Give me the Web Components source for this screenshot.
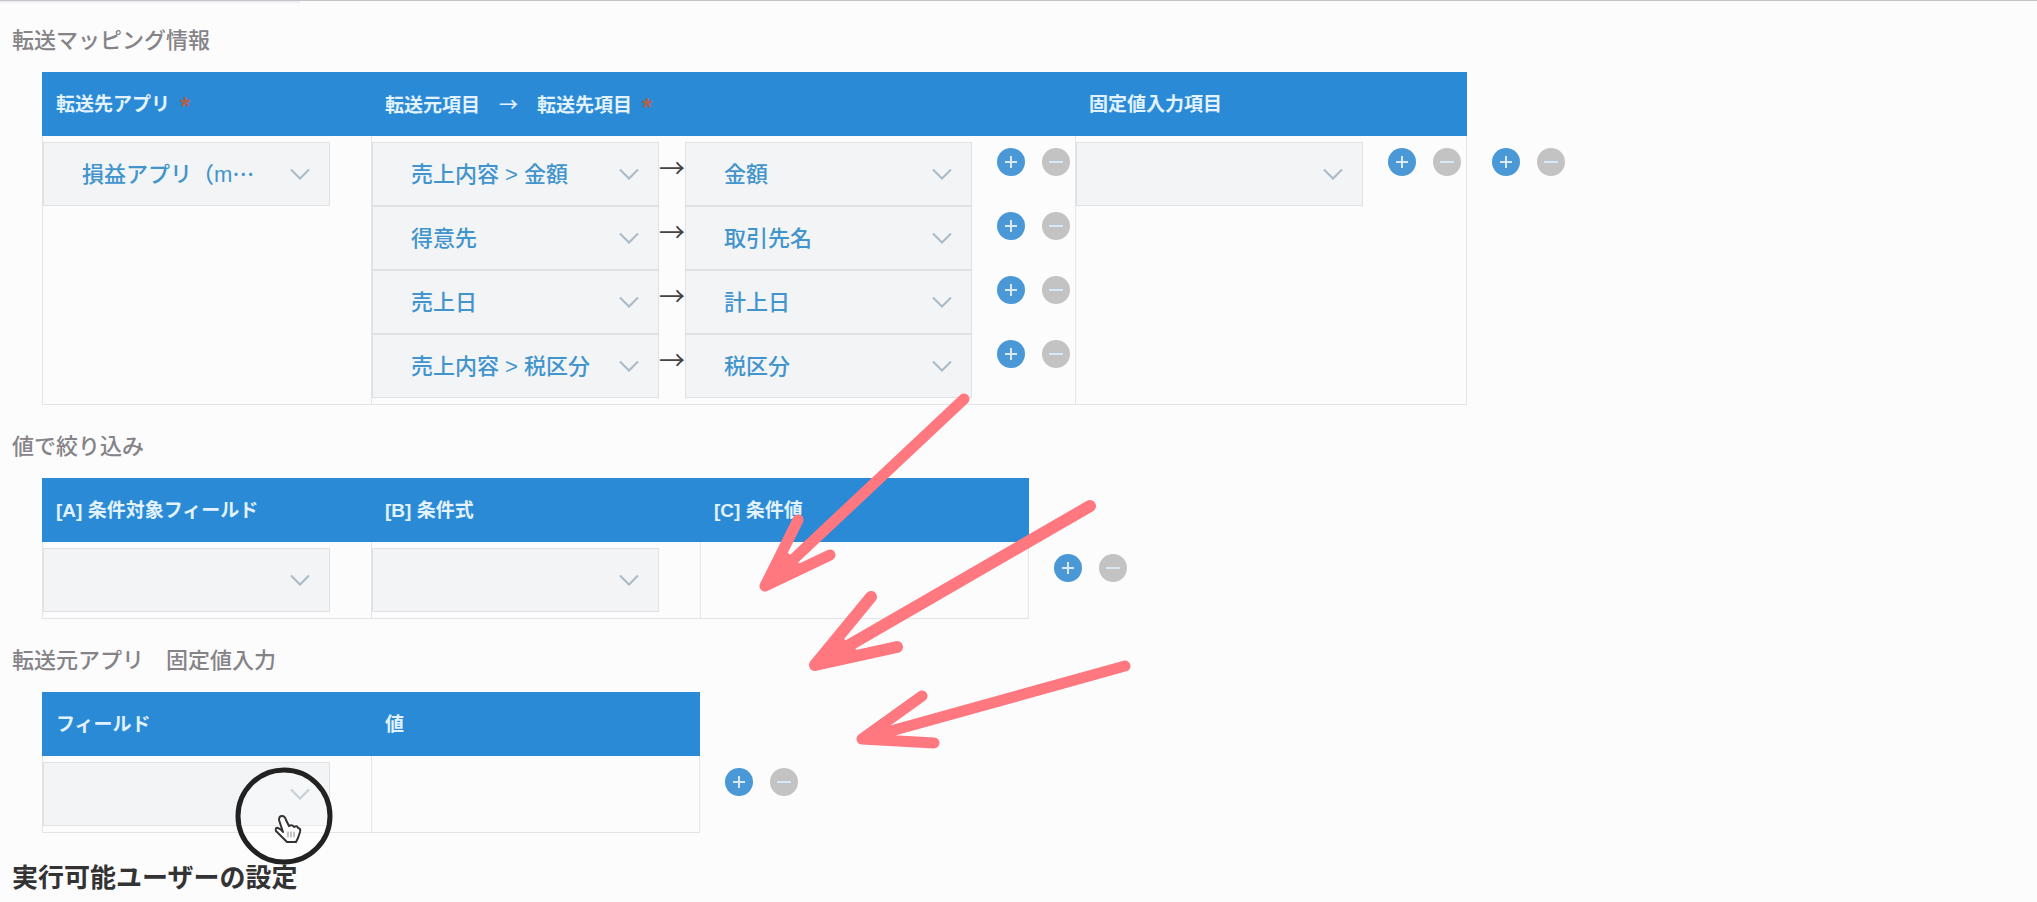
<!DOCTYPE html>
<html lang="ja">
<head>
<meta charset="utf-8">
<title>転送マッピング設定</title>
<style>
  body {
    margin: 0;
    background: #fcfcfd;
    font-family: "Liberation Sans", "Noto Sans CJK JP", sans-serif;
  }
</style>
</head>
<body>
<settings-page>
  <settings-section>
    <span slot="heading">転送マッピング情報</span>
    <mapping-table></mapping-table>
    <row-actions></row-actions>
  </settings-section>
  <settings-section>
    <span slot="heading">値で絞り込み</span>
    <filter-table></filter-table>
    <row-actions></row-actions>
  </settings-section>
  <settings-section>
    <span slot="heading">転送元アプリ　固定値入力</span>
    <fixed-table></fixed-table>
    <row-actions></row-actions>
  </settings-section>
  <span slot="footer">実行可能ユーザーの設定</span>
  <guide-marks slot="overlay"></guide-marks>
</settings-page>

<script>
const tableStyles = `
  :host {
    display: block;
  }

  table {
    table-layout: fixed;
    border-collapse: separate;
    border-spacing: 0;
  }

  col {
    width: 329px;
  }

  th, td {
    box-sizing: border-box;
    text-align: left;
  }

  th {
    height: 64px;
    padding: 2px 14px 0;
    background: #2a8ad6;
    color: #e2f3ff;
    font-size: 19px;
    line-height: 28px;
    font-weight: 700;
    white-space: nowrap;
  }

  td {
    height: 77px;
    padding: 6px 0;
    border: 0 solid #e4e4e8;
    border-width: 0 0 1px 1px;
    vertical-align: top;
  }

  td:last-child {
    border-right-width: 1px;
  }

  .arrow {
    font-family: "Noto Sans CJK JP", sans-serif;
    font-weight: 500;
  }

  .required {
    margin-left: 10px;
    color: #b0604f;
    font-size: 26px;
    line-height: 20px;
    vertical-align: middle;
  }
`;

function define(name, html, setup) {
  const template = document.createElement('template');

  template.innerHTML = html;

  window.customElements.define(name, class extends HTMLElement {
    constructor() {
      super();
      this.attachShadow({ mode: 'open' }).appendChild(template.content.cloneNode(true));
    }

    connectedCallback() {
      if (setup) {
        setup(this, this.shadowRoot);
      }
    }
  });
}

define('settings-page', `
  <style>
    :host {
      display: block;
      position: relative;
      border-top: 1px solid #c6c4c9;
      color: #333;
    }

    .tab-edge {
      width: 300px;
      height: 3px;
      background: linear-gradient(#e9e7ec, #fcfcfd);
    }

    main {
      padding: 21px 12px 0;
    }

    h2 {
      margin: 0;
      font-size: 26px;
      line-height: 38px;
      font-weight: 700;
    }
  </style>
  <div class="tab-edge"></div>
  <main>
    <slot></slot>
    <h2><slot name="footer"></slot></h2>
  </main>
  <slot name="overlay"></slot>
`);

define('settings-section', `
  <style>
    :host {
      display: block;
      margin-bottom: 26px;
    }

    h3 {
      margin: 0 0 15px;
      color: #858388;
      font-size: 22px;
      line-height: 32px;
      font-weight: 500;
    }

    .content {
      display: flex;
      margin-left: 30px;
    }

    /* lines the buttons up with the first body row */
    ::slotted(row-actions) {
      margin-top: 76px;
    }
  </style>
  <h3><slot name="heading"></slot></h3>
  <div class="content"><slot></slot></div>
`);

define('field-select', `
  <style>
    :host {
      display: grid;
      width: 287px;
      height: 64px;
    }

    select, svg {
      grid-area: 1 / 1;
    }

    select {
      box-sizing: border-box;
      width: 100%;
      height: 100%;
      margin: 0;
      padding: 0 38px;
      border: 1px solid #e0e1e5;
      border-radius: 0;
      appearance: none;
      background: #f3f4f6;
      color: #4294cc;
      font-family: inherit;
      font-size: 22px;
      font-weight: 500;
    }

    svg {
      align-self: center;
      justify-self: end;
      width: 20px;
      height: 12px;
      margin-right: 20px;
      pointer-events: none;
    }
  </style>
  <select><option></option></select>
  <svg viewBox="0 0 20 12" fill="none" stroke="#a9bac6" stroke-width="2">
    <path d="M1 1.5 10 10.5 19 1.5"/>
  </svg>
`, (host, root) => {
  root.querySelector('select').setAttribute('aria-label', host.getAttribute('label'));
  root.querySelector('option').textContent = host.getAttribute('value') || '';
});

define('row-actions', `
  <style>
    :host {
      display: flex;
      gap: 17px;
      height: 28px;
      margin-top: 6px;
      padding-left: 25px;
    }

    button {
      width: 28px;
      height: 28px;
      padding: 0;
      border: 0;
      border-radius: 50%;
      background: #c3c3c4;
      cursor: pointer;
    }

    .add {
      background: #4a98d6;
    }

    svg {
      display: block;
      width: 28px;
      height: 28px;
      fill: none;
      stroke: #d8e8f4;
      stroke-width: 2;
    }
  </style>
  <button class="add" type="button" aria-label="追加">
    <svg viewBox="0 0 28 28"><path d="M14 8v12M8 14h12"/></svg>
  </button>
  <button type="button" aria-label="削除">
    <svg viewBox="0 0 28 28"><path d="M7 14h14"/></svg>
  </button>
`);

define('mapping-row', `
  <style>
    :host {
      display: flex;
      height: 64px;
    }

    .arrow {
      width: 26px;
      color: #444;
      font-family: "Noto Sans CJK JP", sans-serif;
      font-size: 26px;
      line-height: 50px;
      text-align: center;
    }
  </style>
  <field-select class="from" label="転送元項目"></field-select>
  <span class="arrow">→</span>
  <field-select class="to" label="転送先項目"></field-select>
  <row-actions></row-actions>
`, (host, root) => {
  root.querySelector('.from').shadowRoot.querySelector('option').textContent = host.getAttribute('from');
  root.querySelector('.to').shadowRoot.querySelector('option').textContent = host.getAttribute('to');
});

define('mapping-table', `
  <style>
    ${tableStyles}

    .mapping {
      width: 704px;
    }

    .fixed {
      width: 392px;
    }

    table {
      width: 1425px;
    }

    .field {
      display: flex;
    }
  </style>
  <table>
    <colgroup><col><col class="mapping"><col class="fixed"></colgroup>
    <thead>
      <tr>
        <th>転送先アプリ<span class="required">*</span></th>
        <th>転送元項目　<span class="arrow">→</span>　転送先項目<span class="required">*</span></th>
        <th>固定値入力項目</th>
      </tr>
    </thead>
    <tbody>
      <tr>
        <td><field-select label="転送先アプリ" value="損益アプリ（m⋯"></field-select></td>
        <td>
          <mapping-row from="売上内容 &gt; 金額" to="金額"></mapping-row>
          <mapping-row from="得意先" to="取引先名"></mapping-row>
          <mapping-row from="売上日" to="計上日"></mapping-row>
          <mapping-row from="売上内容 &gt; 税区分" to="税区分"></mapping-row>
        </td>
        <td>
          <div class="field">
            <field-select label="固定値入力項目"></field-select>
            <row-actions></row-actions>
          </div>
        </td>
      </tr>
    </tbody>
  </table>
`);

define('filter-table', `
  <style>
    ${tableStyles}

    table {
      width: 987px;
    }
  </style>
  <table>
    <colgroup><col><col><col></colgroup>
    <thead>
      <tr>
        <th>[A] 条件対象フィールド</th>
        <th>[B] 条件式</th>
        <th>[C] 条件値</th>
      </tr>
    </thead>
    <tbody>
      <tr>
        <td><field-select label="条件対象フィールド"></field-select></td>
        <td><field-select label="条件式"></field-select></td>
        <td></td>
      </tr>
    </tbody>
  </table>
`);

define('fixed-table', `
  <style>
    ${tableStyles}

    table {
      width: 658px;
    }
  </style>
  <table>
    <colgroup><col><col></colgroup>
    <thead>
      <tr>
        <th>フィールド</th>
        <th>値</th>
      </tr>
    </thead>
    <tbody>
      <tr>
        <td><field-select label="フィールド"></field-select></td>
        <td></td>
      </tr>
    </tbody>
  </table>
`);

// Hand-drawn arrows and the highlighted pointer, laid over the page
define('guide-marks', `
  <style>
    :host {
      position: absolute;
      top: -1px;
      left: 0;
      pointer-events: none;
    }

    svg {
      display: block;
    }
  </style>
  <svg width="1200" height="880" viewBox="0 0 1200 880" fill="none" stroke-linecap="round" stroke-linejoin="round">
    <g stroke="#ff777f">
      <path stroke-width="11" d="M964 399 765 586M798 520 765 586 830 555"/>
      <path stroke-width="12" d="M1090 506 815 665M871 597 815 665 897 647"/>
      <path stroke-width="11" d="M1125 666 862 739M922 696 862 739 934 743"/>
    </g>
    <g fill="#ff777f">
      <path d="M765 586 787 552 800 564Z"/>
      <path d="M815 665 843 638 857 650Z"/>
      <path d="M862 739 890 722 894 739Z"/>
    </g>
    <circle cx="284" cy="816" r="46" fill="#fff" fill-opacity=".3" stroke="#222" stroke-width="5"/>
    <path fill="#fff" stroke="#333" stroke-width="2" d="M283 832 279 820Q279 816 282 816 285 816 286 820L289 826Q292 824 294 827 297 825 298 828 301 828 300 832L298 838 296 842 287 842 282 837 276 831Q275 827 278 828 281 829 283 832Z"/>
    <path stroke="#888" stroke-width="1" d="M288 832v5M291 832v5M294 832v5"/>
  </svg>
`);
</script>
</body>
</html>
